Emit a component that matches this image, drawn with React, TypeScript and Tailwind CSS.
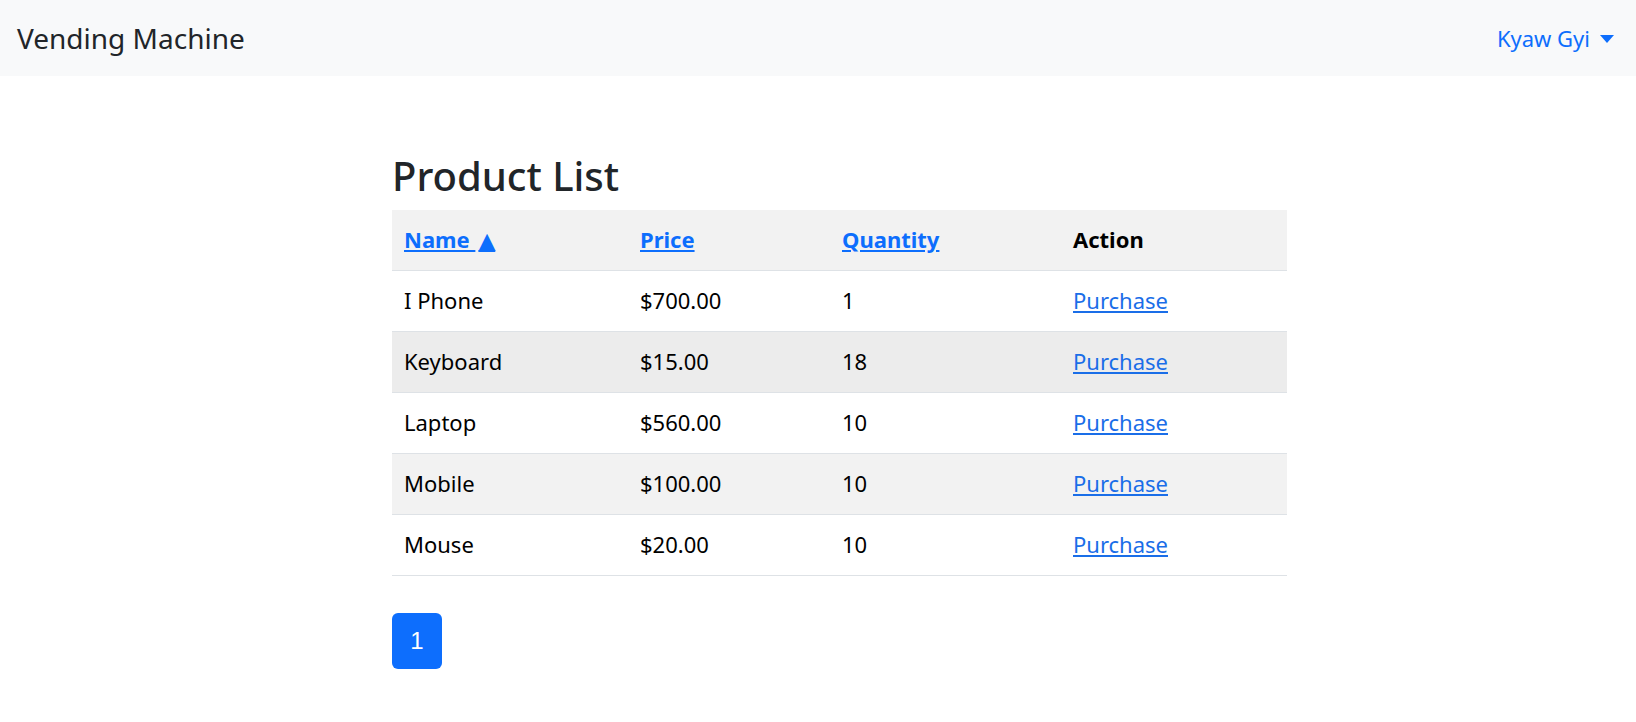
const products = [
  { name: "I Phone", price: "$700.00", qty: "1", bg: "bg-white" },
  { name: "Keyboard", price: "$15.00", qty: "18", bg: "bg-[#ececec]" },
  { name: "Laptop", price: "$560.00", qty: "10", bg: "bg-white" },
  { name: "Mobile", price: "$100.00", qty: "10", bg: "bg-[#f2f2f2]" },
  { name: "Mouse", price: "$20.00", qty: "10", bg: "bg-white" },
];

const cols = ["w-[236px]", "w-[202px]", "w-[231px]", "w-[226px]"];

function Navbar() {
  return (
    <nav className="flex h-[76px] items-center justify-between bg-[#f8f9fa] pl-[17px] pr-[22px]">
      <span className="text-[28px] text-[#212529]">Vending Machine</span>
      <button className="flex items-center gap-[10px] text-[22px] text-[#0d6efd]">
        Kyaw Gyi
        <svg width="14" height="8" viewBox="0 0 14 8" className="mt-[1px]">
          <path d="M0 0h14L7 8z" fill="currentColor" />
        </svg>
      </button>
    </nav>
  );
}

export default function App() {
  return (
    <div className="min-h-[722px] bg-white font-['Noto_Sans',sans-serif] text-black">
      <Navbar />
      <main className="ml-[392px] w-[895px] pt-[76px]">
        <h2 className="mb-[10px] text-[40px] font-medium leading-[48px] text-[#212529]">Product List</h2>
        <table className="w-full border-collapse text-left text-[22px]">
          <thead>
            <tr className="h-[60px] border-b border-[#dee2e6] bg-[#f2f2f2]">
              <th className={`${cols[0]} px-[12px] font-bold`}>
                <a href="#" className="text-[#0d6efd] underline">
                  Name <span className="ml-[3px] font-['DejaVu_Sans',sans-serif] text-[22px] leading-none">▲</span>
                </a>
              </th>
              <th className={`${cols[1]} px-[12px] font-bold`}>
                <a href="#" className="text-[#0d6efd] underline">Price</a>
              </th>
              <th className={`${cols[2]} px-[12px] font-bold`}>
                <a href="#" className="text-[#0d6efd] underline">Quantity</a>
              </th>
              <th className={`${cols[3]} px-[12px] font-bold`}>Action</th>
            </tr>
          </thead>
          <tbody>
            {products.map((p) => (
              <tr key={p.name} className={`h-[61px] border-b border-[#dee2e6] ${p.bg}`}>
                <td className="px-[12px]">{p.name}</td>
                <td className="px-[12px]">{p.price}</td>
                <td className="px-[12px]">{p.qty}</td>
                <td className="px-[12px]">
                  <a href="#" className="text-[#1a6ee8] underline underline-offset-2">Purchase</a>
                </td>
              </tr>
            ))}
          </tbody>
        </table>
        <div className="mt-[37px] flex">
          <button className="flex h-[56px] w-[50px] items-center justify-center rounded-[6px] bg-[#0d6efd] font-['Liberation_Sans',sans-serif] text-[24px] text-white">
            1
          </button>
        </div>
      </main>
    </div>
  );
}
